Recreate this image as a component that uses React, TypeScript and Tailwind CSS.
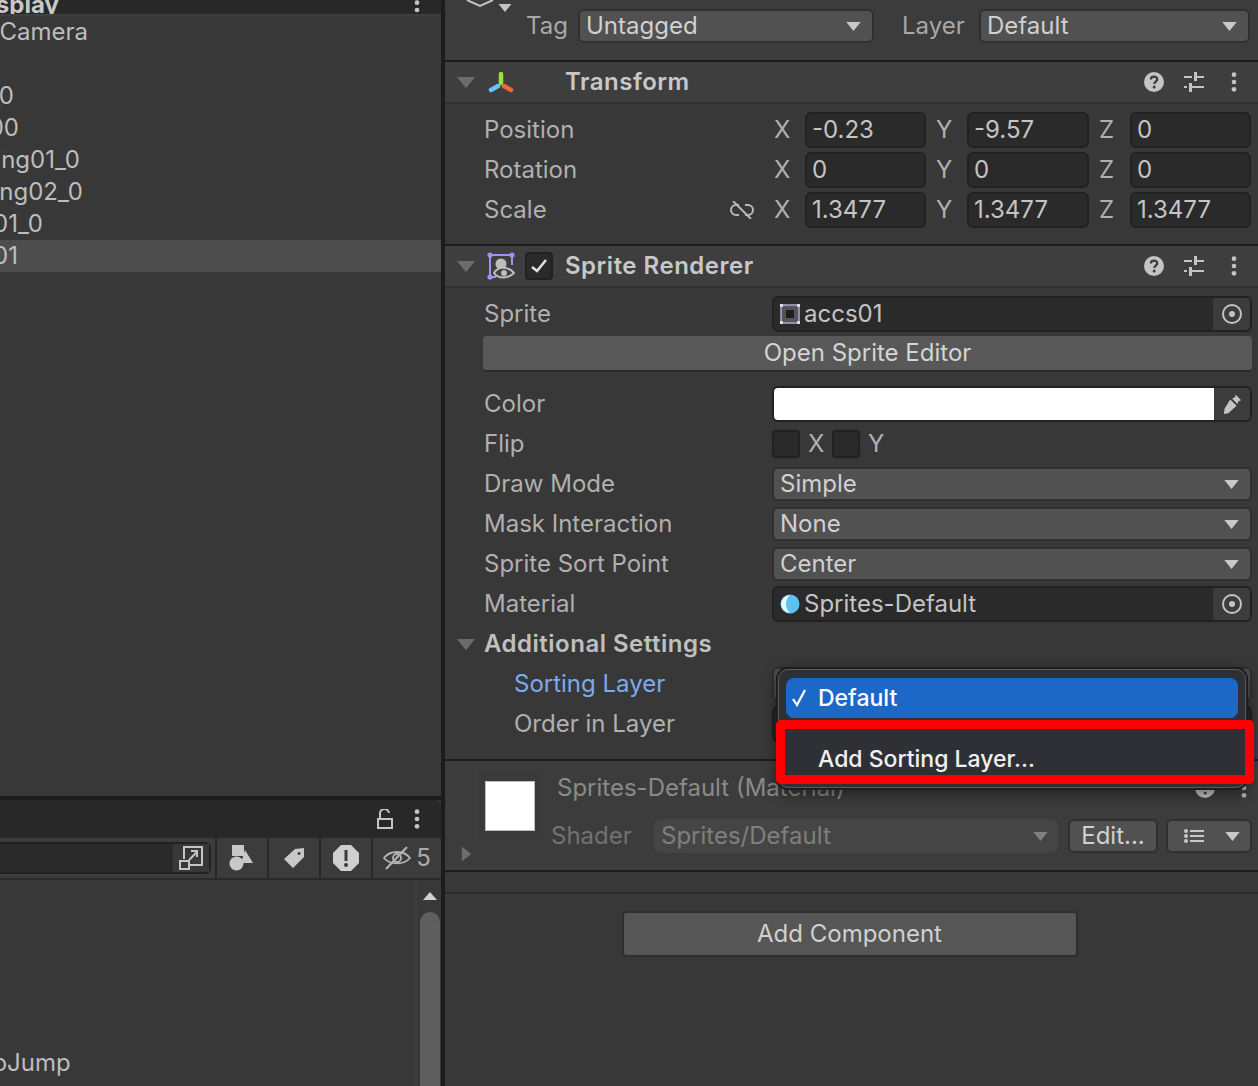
import React from "react";

const Tri = ({ className = "" }: { className?: string }) => (
  <svg viewBox="0 0 16 10" className={className} fill="currentColor"><path d="M0 0h16L8 10z" /></svg>
);

const Dots = ({ className = "" }: { className?: string }) => (
  <svg viewBox="0 0 6 22" className={className} fill="currentColor"><circle cx="3" cy="3" r="2.6" /><circle cx="3" cy="11" r="2.6" /><circle cx="3" cy="19" r="2.6" /></svg>
);

const Help = ({ className = "" }: { className?: string }) => (
  <svg viewBox="0 0 20 20" className={className}>
    <circle cx="10" cy="10" r="10" fill="#c4c4c4" />
    <path d="M6.8 7.6c0-2 1.5-3 3.3-3s3.2 1 3.2 2.7c0 2.4-3 2.4-3 4.6" fill="none" stroke="#3c3c3c" strokeWidth="2.2" />
    <circle cx="10.2" cy="15" r="1.5" fill="#3c3c3c" />
  </svg>
);

const Sliders = ({ className = "" }: { className?: string }) => (
  <svg viewBox="0 0 20 20" className={className} fill="#c4c4c4">
    <rect x="0" y="4" width="8" height="2" /><rect x="10" y="0" width="3" height="9" /><rect x="13" y="4" width="7" height="2" />
    <rect x="0" y="14" width="3" height="2" /><rect x="5" y="11" width="3" height="9" /><rect x="8" y="14" width="12" height="2" />
  </svg>
);

const HeaderTools = () => (
  <div className="ml-auto flex items-center text-[#c4c4c4]">
    <Help className="h-5 w-5" />
    <Sliders className="ml-5 h-5 w-5" />
    <Dots className="ml-[27px] mr-[21px] h-[20px] w-[6px]" />
  </div>
);

const Dropdown = ({ text, className = "" }: { text: string; className?: string }) => (
  <div className={`flex h-[34px] items-center rounded-[6px] border-2 border-[#303030] bg-[#515151] pl-[6px] pr-[11px] text-[#d0d0d0] ${className}`}>
    <span>{text}</span>
    <Tri className="ml-auto h-[9px] w-[15px] text-[#c8c8c8]" />
  </div>
);

const Num = ({ v, className = "" }: { v: string; className?: string }) => (
  <div className={`flex h-9 items-center rounded-[6px] border-2 border-[#212121] bg-[#2a2a2a] pl-[5px] text-[#c4c4c4] ${className}`}>{v}</div>
);

const Target = () => (
  <svg viewBox="0 0 20 20" className="h-5 w-5">
    <circle cx="10" cy="10" r="9" fill="none" stroke="#c4c4c4" strokeWidth="2" />
    <circle cx="10" cy="10" r="3" fill="#c4c4c4" />
  </svg>
);

const ObjField = ({ icon, text }: { icon: React.ReactNode; text: string }) => (
  <div className="flex h-9 w-[480px] items-center overflow-hidden rounded-[6px] border-2 border-[#212121] bg-[#2a2a2a] text-[#c4c4c4]">
    <span className="ml-[6px] mr-[4px] flex h-5 w-5 items-center justify-center">{icon}</span>
    <span>{text}</span>
    <span className="ml-auto flex h-full w-[37px] items-center justify-center bg-[#3c3c3c]"><Target /></span>
  </div>
);

const Row = ({ label, children, blue, indent }: { label: string; children?: React.ReactNode; blue?: boolean; indent?: boolean }) => (
  <div className="flex h-10 items-center pl-[39px]">
    <span className={`${indent ? "ml-[30px] w-[258px]" : "w-[288px]"} ${blue ? "text-[#7babec]" : "text-[#b0b0b0]"}`}>{label}</span>
    {children}
  </div>
);

const XYZ = ({ label, vals, link }: { label: string; vals: string[]; link?: boolean }) => (
  <div className="flex h-10 items-center pl-[39px] text-[#b0b0b0]">
    <span className="w-[246px]">{label}</span>
    <span className="flex w-[44px] items-center">
      {link && (
        <svg viewBox="0 0 24 18" className="h-[18px] w-6" fill="none" stroke="#b8b8b8" strokeWidth="2">
          <path d="M9 4H6a5 5 0 0 0 0 10h3M15 4h3a5 5 0 0 1 0 10h-3" />
          <path d="M3 0l18 18" />
        </svg>
      )}
    </span>
    <span className="w-[31px]">X</span>
    <Num v={vals[0]} className="w-[121px]" />
    <span className="ml-[10px] w-[31px]">Y</span>
    <Num v={vals[1]} className="w-[122px]" />
    <span className="ml-[10px] w-[31px]">Z</span>
    <Num v={vals[2]} className="w-[121px]" />
  </div>
);

const Check = () => <div className="h-7 w-7 rounded-[4px] border-2 border-[#212121] bg-[#2a2a2a]" />;

const names: [string, string][] = [
  ["Main Camera", "w-[88px]"],
  ["", "w-[10px]"],
  ["bg_0", "w-[14px]"],
  ["bg_00", "w-[19px]"],
  ["building01_0", "w-[80px]"],
  ["building02_0", "w-[83px]"],
  ["ground01_0", "w-[43px]"],
  ["accs01", "w-[18px]"],
];

const ToolCell = ({ children }: { children: React.ReactNode }) => (
  <div className="ml-[2px] flex h-full w-[50px] items-center justify-center bg-[#3c3c3c]">{children}</div>
);

export default function App() {
  return (
    <div className="relative flex h-[1086px] w-[1258px] overflow-hidden bg-[#383838] font-['Inter',sans-serif] text-[24px] leading-none">
      {/* Left column */}
      <div className="flex h-full w-[441px] shrink-0 flex-col overflow-hidden">
        <div className="flex h-[14px] shrink-0 items-end justify-between overflow-hidden bg-[#282828] pr-[21px]">
          <span className="-ml-[28px] mb-[-3px] font-bold text-[#c8c8c8]">Display</span>
          <Dots className="mb-[-6px] h-[20px] w-[6px] shrink-0 text-[#c4c4c4]" />
        </div>
        <div className="h-[2px] shrink-0 bg-[#3f3f3f]" />
        {names.map(([n, w], i) => (
          <div key={i} className={`flex h-8 shrink-0 items-center ${i === 7 ? "bg-[#4d4d4d]" : ""}`}>
            <div className={`flex justify-end whitespace-nowrap text-[#bdbdbd] ${w}`}>{n}</div>
          </div>
        ))}
        <div className="flex-1" />
        <div className="h-1 shrink-0 bg-[#1c1c1c]" />
        <div className="flex h-[38px] shrink-0 items-center justify-end rounded-tr-[6px] bg-[#282828] pr-[21px]">
          <svg viewBox="0 0 16 20" className="h-5 w-4" fill="none" stroke="#c4c4c4" strokeWidth="2">
            <path d="M1 10h14v9H1zM3 10V5a4.5 4.5 0 0 1 9-1" />
          </svg>
          <Dots className="ml-[21px] h-[20px] w-[6px] text-[#c4c4c4]" />
        </div>
        <div className="flex h-10 shrink-0 bg-[#282828]">
          <div className="flex h-full w-[215px] shrink-0 items-center bg-[#3c3c3c]">
            <div className="flex h-8 w-[211px] items-center justify-end rounded-r-[6px] border-2 border-l-0 border-[#212121] bg-[#2a2a2a]">
              <span className="flex h-full w-9 items-center justify-center bg-[#383838]">
                <svg viewBox="0 0 24 24" className="h-6 w-6" fill="none" stroke="#c4c4c4" strokeWidth="2">
                  <path d="M5 13V1h18v18H11" /><path d="M1 15h9v8H1zM10 14l8-8M12 5h6v6" />
                </svg>
              </span>
            </div>
          </div>
          <ToolCell>
            <svg viewBox="0 0 26 26" className="h-[26px] w-[26px]" fill="#c8c8c8">
              <rect x="3" y="0" width="12" height="11" /><circle cx="7.5" cy="18.5" r="7" /><path d="M16 5l8 13H12z" />
            </svg>
          </ToolCell>
          <ToolCell>
            <svg viewBox="0 0 22 22" className="h-[22px] w-[22px]" fill="#c8c8c8">
              <path d="M1 12 12 2l9-1 0 9L10 21zM16 5a1.5 1.5 0 1 0 .1 0z" fillRule="evenodd" />
            </svg>
          </ToolCell>
          <ToolCell>
            <svg viewBox="0 0 26 26" className="h-[26px] w-[26px]">
              <path d="M8 0h10l8 8v10l-8 8H8l-8-8V8z" fill="#d0d0d0" />
              <rect x="11.5" y="5" width="3" height="11" fill="#3c3c3c" /><circle cx="13" cy="20" r="2" fill="#3c3c3c" />
            </svg>
          </ToolCell>
          <div className="ml-[2px] flex h-full flex-1 items-center justify-center bg-[#3c3c3c] text-[#aaaaaa]">
            <svg viewBox="0 0 28 24" className="mr-[5px] h-6 w-7" fill="none" stroke="#b4b4b4" strokeWidth="1.8">
              <path d="M1 12c6-8 20-8 26 0-6 7-20 7-26 0z" /><circle cx="14" cy="12" r="4" /><path d="M3 23 24 1" strokeWidth="2" />
            </svg>
            5
          </div>
        </div>
        <div className="h-[2px] shrink-0 bg-[#2a2a2a]" />
        <div className="flex h-[206px] shrink-0">
          <div className="flex flex-1 items-end pb-[11px]">
            <span className="-ml-[22px] w-[86px] whitespace-nowrap text-right text-[#bdbdbd]">boJump</span>
          </div>
          <div className="flex w-[26px] flex-col items-center border-l-2 border-[#3e3e3e] pt-[12px] pl-[1px]">
            <svg viewBox="0 0 14 8" className="h-2 w-[14px]" fill="#d0d0d0"><path d="M7 0l7 8H0z" /></svg>
            <div className="mt-[12px] w-5 flex-1 rounded-t-[10px] bg-[#5f5f5f]" />
          </div>
        </div>
      </div>

      {/* Divider */}
      <div className="h-full w-1 shrink-0 bg-[#1c1c1c]" />

      {/* Inspector */}
      <div className="flex h-full flex-1 flex-col bg-[#383838]">
        <div className="relative flex h-[62px] shrink-0 items-start border-b-2 border-[#1c1c1c] bg-[#3c3c3c] pt-[9px]">
          <svg viewBox="0 0 28 8" className="absolute left-[21px] top-0 h-2 w-7" fill="none" stroke="#c4c4c4" strokeWidth="2">
            <path d="M1 0l13 6 13-6" />
          </svg>
          <Tri className="absolute left-[53px] top-1 h-2 w-[14px] text-[#c4c4c4]" />
          <span className="ml-[81px] flex h-[34px] w-[52px] items-center text-[#a8a8a8]">Tag</span>
          <Dropdown text="Untagged" className="w-[296px]" />
          <span className="ml-[28px] flex h-[34px] w-[77px] items-center text-[#a8a8a8]">Layer</span>
          <Dropdown text="Default" className="w-[271px]" />
        </div>

        {/* Transform */}
        <div className="flex h-[42px] shrink-0 items-center border-b-2 border-[#303030] bg-[#3e3e3e]">
          <Tri className="ml-[12px] h-[15px] w-[18px] text-[#6c6c6c]" />
          <svg viewBox="0 0 26 22" className="ml-[13px] h-[22px] w-[26px]" fill="none" strokeWidth="4.5" strokeLinecap="round">
            <path d="M13 3v9" stroke="#9be23c" /><path d="M3 19l7-4" stroke="#62c6f4" /><path d="M23 19l-7-4" stroke="#f0683a" />
          </svg>
          <span className="ml-[51px] font-semibold tracking-[0.5px] text-[#c8c8c8]">Transform</span>
          <HeaderTools />
        </div>
        <div className="flex h-[142px] shrink-0 flex-col border-b-2 border-[#1c1c1c] pt-[6px]">
          <XYZ label="Position" vals={["-0.23", "-9.57", "0"]} />
          <XYZ label="Rotation" vals={["0", "0", "0"]} />
          <XYZ label="Scale" vals={["1.3477", "1.3477", "1.3477"]} link />
        </div>

        {/* Sprite Renderer */}
        <div className="flex h-[42px] shrink-0 items-center border-b-2 border-[#303030] bg-[#3e3e3e]">
          <Tri className="ml-[12px] h-[15px] w-[18px] text-[#6c6c6c]" />
          <svg viewBox="0 0 28 28" className="ml-[12px] h-7 w-7">
            <path d="M3 3h22M3 3v22M25 3v10M3 25h6" stroke="#a98cf0" strokeWidth="2" fill="none" />
            <circle cx="3" cy="3" r="2.6" fill="#a98cf0" /><circle cx="25" cy="3" r="2.6" fill="#a98cf0" /><circle cx="3" cy="25" r="2.6" fill="#a98cf0" />
            <circle cx="14" cy="12" r="5.5" fill="#bdbdbd" />
            <path d="M7 21c4-7 14-7 20 0-6 6-16 6-20 0z" fill="#3e3e3e" stroke="#bdbdbd" strokeWidth="2" />
            <circle cx="17" cy="21" r="3" fill="#bdbdbd" />
          </svg>
          <span className="ml-[10px] flex h-7 w-7 items-center justify-center rounded-[4px] border-2 border-[#212121] bg-[#2a2a2a]">
            <svg viewBox="0 0 16 14" className="h-[14px] w-4" fill="none" stroke="#e0e0e0" strokeWidth="2.6"><path d="M1 8l5 4 9-11" /></svg>
          </span>
          <span className="ml-[12px] font-semibold tracking-[0.5px] text-[#c8c8c8]">Sprite Renderer</span>
          <HeaderTools />
        </div>
        <div className="flex h-[473px] shrink-0 flex-col border-b-2 border-[#1c1c1c] pt-[6px]">
          <Row label="Sprite">
            <ObjField
              text="accs01"
              icon={
                <svg viewBox="0 0 20 20" className="h-5 w-5">
                  <rect x="1" y="1" width="18" height="18" fill="#555" stroke="#a9a9d8" strokeWidth="1.5" />
                  <rect x="6" y="6" width="8" height="8" fill="#1e1e1e" />
                  <rect x="0" y="0" width="3" height="3" fill="#ddd" /><rect x="17" y="0" width="3" height="3" fill="#ddd" /><rect x="0" y="17" width="3" height="3" fill="#ddd" /><rect x="17" y="17" width="3" height="3" fill="#ddd" />
                </svg>
              }
            />
          </Row>
          <div className="pl-[38px] pt-[2px]">
            <div className="flex h-[36px] w-[769px] items-center justify-center rounded-[4px] border-b-2 border-[#2a2a2a] bg-[#585858] pl-[0px] text-[#d4d4d4]">Open Sprite Editor</div>
          </div>
          <div className="mt-[12px]">
            <Row label="Color">
              <div className="flex h-9 w-[480px] items-center overflow-hidden rounded-[6px] border-2 border-[#212121] bg-[#3c3c3c]">
                <div className="h-full w-[440px] bg-white" />
                <span className="flex flex-1 items-center justify-center">
                  <svg viewBox="0 0 24 24" className="h-[22px] w-[22px]" fill="#c4c4c4">
                    <path d="M16 2l6 6-3 1-1 3-6-6 3-1zM10 7l7 7-9 8-5 1 1-6z" />
                  </svg>
                </span>
              </div>
            </Row>
          </div>
          <Row label="Flip">
            <div className="flex items-center text-[#b0b0b0]">
              <Check />
              <span className="ml-2 w-6">X</span>
              <Check />
              <span className="ml-2">Y</span>
            </div>
          </Row>
          <Row label="Draw Mode"><Dropdown text="Simple" className="w-[480px]" /></Row>
          <Row label="Mask Interaction"><Dropdown text="None" className="w-[480px]" /></Row>
          <Row label="Sprite Sort Point"><Dropdown text="Center" className="w-[480px]" /></Row>
          <Row label="Material">
            <ObjField
              text="Sprites-Default"
              icon={
                <svg viewBox="0 0 20 20" className="h-5 w-5">
                  <circle cx="10" cy="10" r="9.5" fill="#5cc2ef" />
                  <path d="M10 1a9 9 0 0 0 0 18c-3-3-4-6-4-9s1-6 4-9z" fill="#e8f6fc" />
                </svg>
              }
            />
          </Row>
          <div className="flex h-10 items-center">
            <Tri className="ml-[12px] h-[15px] w-[18px] text-[#6c6c6c]" />
            <span className="ml-[9px] font-semibold tracking-[0.5px] text-[#c0c0c0]">Additional Settings</span>
          </div>
          <Row label="Sorting Layer" blue indent><Dropdown text="Default" className="w-[480px]" /></Row>
          <Row label="Order in Layer" indent><Num v="0" className="w-[480px]" /></Row>
        </div>

        {/* Material */}
        <div className="flex h-[111px] shrink-0 border-b-2 border-[#1c1c1c] bg-[#3c3c3c]">
          <Tri className="ml-[14px] mt-[84px] h-[18px] w-[15px] -rotate-90 text-[#6c6c6c]" />
          <div className="ml-[4px] mt-[10px] flex h-[67px] w-[63px] items-start justify-center bg-[#3a3a3a] pt-[10px]">
            <div className="h-[50px] w-[50px] border border-[#bdbdbd] bg-white" />
          </div>
          <div className="ml-[10px] flex w-[701px] flex-col pt-[7px]">
            <div className="flex h-10 items-center pl-[6px] text-[#8a8a8a]">
              <span>Sprites-Default (Material)</span>
              <Help className="ml-auto h-5 w-5" />
              <Dots className="ml-[26px] mr-[5px] h-[20px] w-[6px] text-[#b4b4b4]" />
            </div>
            <div className="mt-[11px] flex items-center">
              <span className="w-[103px] text-[#727272]">Shader</span>
              <div className="flex h-[34px] w-[404px] items-center rounded-[6px] bg-[#454545] pl-[7px] pr-[10px] text-[#7f7f7f]">
                Sprites/Default
                <Tri className="ml-auto h-[9px] w-[15px] text-[#7f7f7f]" />
              </div>
              <div className="ml-[10px] flex h-[34px] w-[90px] items-center justify-center rounded-[6px] border-2 border-[#303030] bg-[#515151] text-[#d0d0d0]">Edit...</div>
              <div className="ml-[8px] flex h-[34px] w-[86px] items-center rounded-[6px] border-2 border-[#303030] bg-[#515151] pl-[16px] pr-[10px]">
                <svg viewBox="0 0 20 14" className="h-[14px] w-5" fill="#c8c8c8">
                  <circle cx="2" cy="2" r="2" /><circle cx="2" cy="7" r="2" /><circle cx="2" cy="12" r="2" />
                  <rect x="6" y="1" width="14" height="2" /><rect x="6" y="6" width="14" height="2" /><rect x="6" y="11" width="14" height="2" />
                </svg>
                <Tri className="ml-auto h-[9px] w-[15px] text-[#c8c8c8]" />
              </div>
            </div>
          </div>
        </div>
        <div className="h-[22px] shrink-0 border-b-2 border-[#2a2a2a]" />
        <div className="flex flex-1 justify-center pt-[17px] pr-[4px]">
          <div className="flex h-[46px] w-[456px] items-center justify-center rounded-[4px] border-2 border-[#2e2e2e] bg-[#565656] text-[#d0d0d0]">Add Component</div>
        </div>
      </div>

      {/* Popup */}
      <div className="absolute left-[776px] top-[667px] h-[123px] w-[472px] rounded-[12px] border-2 border-[#1e1e1e] bg-[#2f3035] shadow-[0_4px_14px_rgba(0,0,0,0.45)] outline outline-1 -outline-offset-3 outline-[#5a5a5a]">
        <div className="ml-[8px] mt-[9px] flex h-10 w-[452px] items-center rounded-[8px] bg-[#1c68c7] pl-[6px] font-medium text-[23px] text-white">
          <svg viewBox="0 0 16 18" className="h-[18px] w-4" fill="none" stroke="#fff" strokeWidth="2.2"><path d="M1 10l4 6 8-15" /></svg>
          <span className="ml-[10px]">Default</span>
        </div>
        <div className="ml-[40px] mt-[30px] text-[23px] font-medium text-[#f0f0f0]">Add Sorting Layer...</div>
        <div className="absolute -left-[2px] top-[51px] h-[64px] w-[478px] rounded-[5px] border-[9px] border-[#ff0000]" />
      </div>
    </div>
  );
}
